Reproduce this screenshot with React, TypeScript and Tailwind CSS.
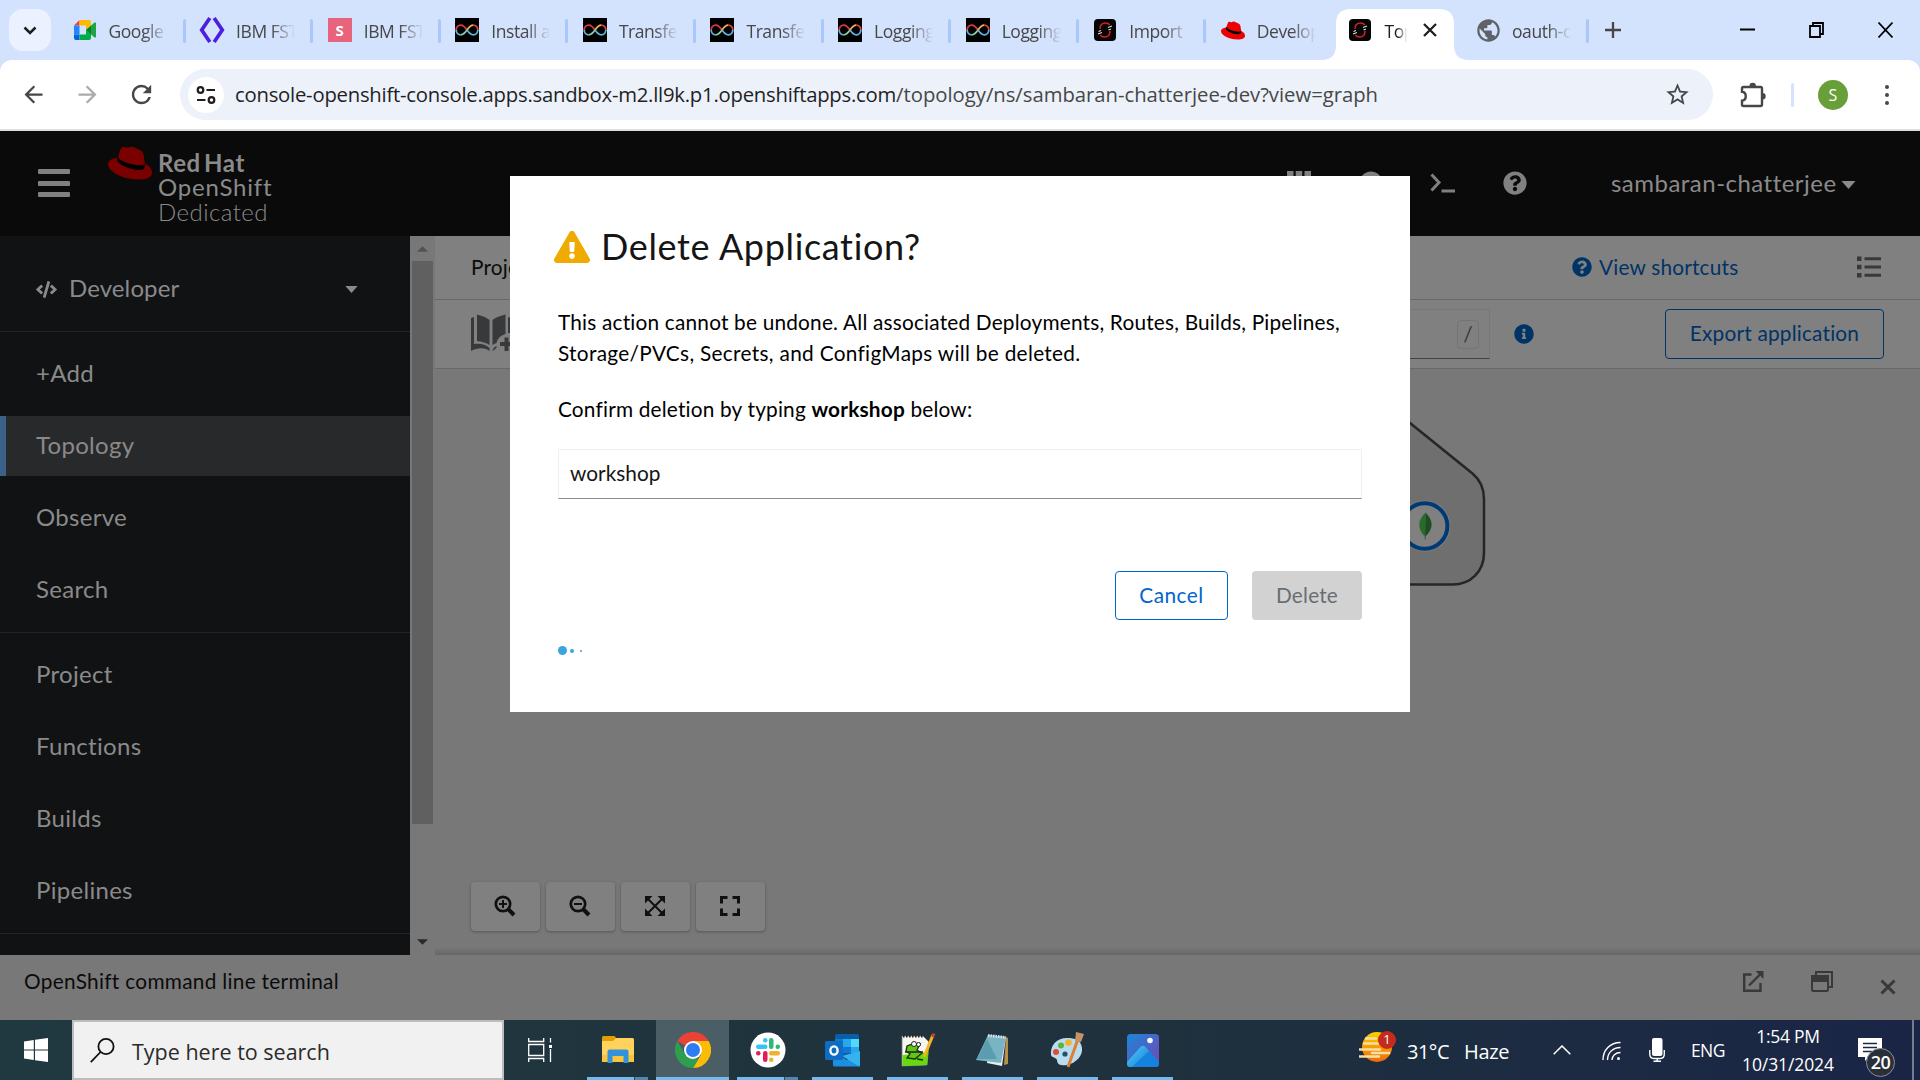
import type { ReactNode } from 'react';
import { FaCode, FaExclamationTriangle, FaInfoCircle, FaPlusCircle, FaQuestionCircle } from 'react-icons/fa';
import { MdArrowBack, MdArrowForward, MdPublic, MdRefresh, MdStarBorder } from 'react-icons/md';

/* ---------- browser tab icons ---------- */

const MeetIcon = () => (
  <svg width="24" height="24" viewBox="0 0 24 24">
    <path d="M1 7.500 6.500 2v5.500z" fill="#ea4335" />
    <path d="M1 7.500h5.500v9H1z" fill="#2684fc" />
    <path d="M1 16.500h5.500V22H3a2 2 0 0 1-2-2z" fill="#0066da" />
    <path d="M6.500 2H16a2 2 0 0 1 2 2v4.500L13 12V7.500H6.500z" fill="#ffba00" />
    <path d="M6.500 16.500H13V12l5 4v4a2 2 0 0 1-2 2H6.500z" fill="#00ac47" />
    <path d="M13 12 21.500 4.600c.6-.5 1.500-.1 1.500.7v13.400c0 .8-.9 1.200-1.500.7z" fill="#1ea446" />
    <path d="M18 8v8l-5-4z" fill="#00832d" />
  </svg>
);

const BracketsIcon = () => (
  <svg width="26" height="26" viewBox="0 0 24 24" fill="none" stroke="#4b1fe0" strokeWidth="3.400" className="shrink-0">
    <path d="M10 1 2.500 12 10 23" />
    <path d="M14 1l7.500 11L14 23" />
  </svg>
);

const SquareSIcon = () => (
  <span className="flex h-6 w-6 items-center justify-center bg-[#e8637c] text-[15px] font-bold text-white">S</span>
);

const InfinityIcon = () => (
  <svg width="24" height="24" viewBox="0 0 24 24" fill="none" strokeWidth="1.800">
    <path d="M0 0h24v24H0z" fill="#000" />
    <path d="M12 12C9.500 8.500 8 7.200 5.800 7.200 3 7.200 1.200 9.400 1.200 12" stroke="#e0383e" />
    <path d="M1.200 12c0 2.600 1.800 4.800 4.600 4.800" stroke="#57b7dd" />
    <path d="M5.800 16.800c2.200 0 3.700-1.300 6.200-4.800" stroke="#8fd0a0" />
    <path d="M12 12c2.500-3.500 4-4.800 6.200-4.800" stroke="#f0b45a" />
    <path d="M18.200 7.200c2.800 0 4.600 2.200 4.600 4.800" stroke="#e04a38" />
    <path d="M22.800 12c0 2.600-1.800 4.800-4.600 4.800-2.200 0-3.700-1.300-6.200-4.800" stroke="#57b7dd" />
  </svg>
);

const OpenShiftIcon = () => (
  <svg width="24" height="24" viewBox="0 0 24 24" fill="none">
    <rect x="1" y="1" width="22" height="22" rx="4" fill="#050505" />
    <path d="M7 11c0-4 2.500-6 5.500-6 2 0 3.500.8 4.300 2M17 13c0 4-2.500 6-5.500 6-2 0-3.500-.8-4.300-2" stroke="#d3202a" strokeWidth="1.500" />
    <path d="M15 9.500l4-1.500M5 16l4-1.500M5.500 13.500l2.500-1M15.500 12l2.500-1" stroke="#ddd" strokeWidth="1.200" />
  </svg>
);

/* Fedora: brim, then band, then crown on top. */
const Hat = ({ w, h, fill }: { w: number; h: number; fill: string }) => (
  <svg width={w} height={h} viewBox="0 0 132 100" className="shrink-0">
    <path d="M28 34C10 36 0 43 0 53c0 19 27 34 52 41 34 9 80 9 80-15 0-12-9-21-24-29z" fill={fill} />
    <path d="M30 30c-3 6-4 11-1 15 8 12 36 24 58 26 20 2 26-6 23-19z" fill="#000" />
    <path d="M30 31 37 10C40 2 45 1 52 3c7 2 9 1 13-1 5-2 10-1 16 2l15 7c6 3 9 7 11 15l4 27c-6 5-22 5-42 0C49 48 34 40 30 31z" fill={fill} />
  </svg>
);

type Tab = { title: string; icon: ReactNode; active?: boolean; sep?: boolean };

const tabs: Tab[] = [
  { title: 'Google', icon: <MeetIcon />, sep: true },
  { title: 'IBM FST', icon: <BracketsIcon />, sep: true },
  { title: 'IBM FST', icon: <SquareSIcon />, sep: true },
  { title: 'Install a', icon: <InfinityIcon />, sep: true },
  { title: 'Transfe', icon: <InfinityIcon />, sep: true },
  { title: 'Transfe', icon: <InfinityIcon />, sep: true },
  { title: 'Logging', icon: <InfinityIcon />, sep: true },
  { title: 'Logging', icon: <InfinityIcon />, sep: true },
  { title: 'Import', icon: <OpenShiftIcon />, sep: true },
  { title: 'Develop', icon: <Hat w={24} h={19} fill="#ee0000" /> },
  { title: 'Top', icon: <OpenShiftIcon />, active: true },
  { title: 'oauth-o', icon: <MdPublic className="shrink-0" size={27} color="#5f6368" />, sep: true },
];

function BrowserTab({ tab }: { tab: Tab }) {
  return (
    <div className="relative flex h-[60px] w-[127.6px] shrink-0 items-center pl-4">
      {tab.active && (
        <svg className="absolute bottom-0 left-[-11px]" width="148" height="51" viewBox="0 0 148 51">
          <path d="M0 51C10 51 15 46 15 36V15C15 5 20 0 30 0h88c10 0 15 5 15 15v21c0 10 5 15 15 15z" fill="#fff" />
        </svg>
      )}
      <span className="relative flex h-6 w-6 items-center justify-center">{tab.icon}</span>
      <span
        className={
          (tab.active ? 'w-[23px] text-[#1f1f1f]' : 'w-[59px] text-[#474747]') +
          ' relative ml-3 mt-[2px] overflow-hidden whitespace-nowrap text-[17.5px] leading-6 tracking-[-0.450px] [mask-image:linear-gradient(90deg,#000_60%,transparent)]'
        }
      >
        {tab.title}
      </span>
      {tab.active && (
        <svg className="relative ml-[16px]" width="14" height="14" viewBox="0 0 14 14" stroke="#1f1f1f" strokeWidth="2.300">
          <path d="M1 1l12 12M13 1 1 13" />
        </svg>
      )}
      {tab.sep && <i className="absolute right-[-1.500px] top-[19px] h-6 w-[3px] rounded bg-[#a8c7fa]" />}
    </div>
  );
}

function TabStrip() {
  return (
    <div className="flex h-[60px] items-center bg-[#d3e2fd] pl-[9px]">
      <div className="mr-[5.500px] flex h-[42px] w-[42px] items-center justify-center rounded-[14px] bg-[#ebf1fe]">
        <svg width="14" height="9" viewBox="0 0 14 9" fill="none" stroke="#1f1f1f" strokeWidth="2.500">
          <path d="M1.500 1.500 7 7l5.500-5.500" />
        </svg>
      </div>
      {tabs.map((t, i) => (
        <BrowserTab key={i} tab={t} />
      ))}
      <svg className="ml-[17px]" width="16" height="16" viewBox="0 0 16 16" stroke="#474747" strokeWidth="2.300">
        <path d="M8 0v16M0 8h16" />
      </svg>
      <div className="ml-auto flex items-center gap-[54px] pr-[27px]">
        <svg width="15" height="16" viewBox="0 0 15 16"><path d="M0 6.500h15v2H0z" /></svg>
        <svg width="15" height="16" viewBox="0 0 15 16" fill="none" stroke="#000" strokeWidth="1.800">
          <path d="M1 4h10v11H1zM4 4V1h10v11h-3" />
        </svg>
        <svg width="15" height="16" viewBox="0 0 15 16" stroke="#000" strokeWidth="1.700"><path d="M.5.500l14 15M14.500.500l-14 15" /></svg>
      </div>
    </div>
  );
}

function AddressBar() {
  return (
    <div className="bg-[#d3e2fd]">
      <div className="flex h-[71px] items-center rounded-t-[12px] border-b-2 border-[#dcdfde] bg-white pl-[20px]">
        <MdArrowBack size={27} color="#474747" />
        <MdArrowForward className="ml-[27px]" size={27} color="#ababab" />
        <MdRefresh className="ml-[26px]" size={29} color="#474747" />
        <div className="ml-[24px] flex h-[51px] w-[1533px] items-center rounded-full bg-[#ecf1fa] pl-2">
          <span className="flex h-[36px] w-[36px] items-center justify-center rounded-full bg-white">
            <svg width="20" height="20" viewBox="0 0 20 20" fill="none" stroke="#1f1f1f" strokeWidth="2.200">
              <circle cx="4.500" cy="5" r="2.800" />
              <path d="M10.500 5H19M1 15h8.500" />
              <circle cx="15.500" cy="15" r="2.800" />
            </svg>
          </span>
          <p className="mb-[2px] ml-[11px] whitespace-nowrap text-[20.3px] leading-[30px] text-[#1f1f1f]">
            <span className="tracking-[-0.230px]">console-openshift-console.apps.sandbox-m2.ll9k.p1.openshiftapps.com</span>
            <span className="tracking-[-0.020px] text-[#474747]">/topology/ns/sambaran-chatterjee-dev?view=graph</span>
          </p>
          <MdStarBorder className="ml-auto mr-[22px]" size={27} color="#474747" />
        </div>
        <svg className="ml-[27px]" width="26" height="26" viewBox="0 0 26 26">
          <path d="M2 6.500a1.500 1.500 0 0 1 1.500-1.500h17a1.500 1.500 0 0 1 1.500 1.500v16a1.500 1.500 0 0 1-1.500 1.500h-17A1.500 1.500 0 0 1 2 22.500v-3.800c5-.5 5-8.400 0-8.900z" fill="none" stroke="#474747" strokeWidth="2.400" />
          <path d="M9.500 4a3.200 3.200 0 0 1 6.400 0zM22.500 11a3.200 3.200 0 0 1 0 6.400z" fill="#474747" />
        </svg>
        <i className="ml-[25px] h-[24px] w-[3px] rounded bg-[#d3e2fd]" />
        <span className="ml-[24px] flex h-[30px] w-[30px] items-center justify-center rounded-full bg-[#689f38] text-[16px] text-white">S</span>
        <span className="ml-[37px] flex flex-col gap-[4px]">
          <i className="h-[4px] w-[4px] rounded-full bg-[#474747]" />
          <i className="h-[4px] w-[4px] rounded-full bg-[#474747]" />
          <i className="h-[4px] w-[4px] rounded-full bg-[#474747]" />
        </span>
      </div>
    </div>
  );
}

/* ---------- console masthead ---------- */

const CaretDown = ({ w = 14, h = 8, fill = '#8a8a8a' }: { w?: number; h?: number; fill?: string }) => (
  <svg width={w} height={h} viewBox="0 0 14 8"><path d="M0 0h14L7 8z" fill={fill} /></svg>
);

function Masthead() {
  return (
    <header className="flex h-[105px] shrink-0 bg-[#0a0a0a] text-[24px] text-[#8a8a8a]">
      <div className="ml-[38px] mt-[38px] flex w-[32px] flex-col gap-[6.500px]">
        <i className="h-[5px] rounded-[1px] bg-[#808080]" />
        <i className="h-[5px] rounded-[1px] bg-[#808080]" />
        <i className="h-[5px] rounded-[1px] bg-[#808080]" />
      </div>
      <span className="ml-[38px] mt-[15px]"><Hat w={44} h={34} fill="#7a0000" /></span>
      <div className="ml-[6px] mt-[18px] flex flex-col">
        <span className="h-[25px] font-bold leading-[27px] tracking-[0.550px] [word-spacing:-3px]">Red Hat</span>
        <span className="h-[25px] leading-[25px] tracking-[0.800px]">OpenShift</span>
        <span className="h-[25px] font-light leading-[25px] tracking-[0.450px]">Dedicated</span>
      </div>
      <div className="ml-auto flex h-[104px] items-center">
        <svg width="24" height="24" viewBox="0 0 24 24" fill="#808080">
          <path d="M0 0h6.500v6.500H0zM8.700 0h6.500v6.500H8.700zM17.500 0H24v6.500h-6.500zM0 8.700h24v6.500H0zM0 17.500h24V24H0z" />
        </svg>
        <FaPlusCircle className="ml-[48px]" size={24} color="#808080" />
        <svg className="ml-[47px]" width="25" height="20" viewBox="0 0 25 20" fill="none" stroke="#808080" strokeWidth="3">
          <path d="M1.500 1.500 9 9.500l-7.500 8M11.500 18H25" />
        </svg>
        <FaQuestionCircle className="ml-[48px]" size={24} color="#808080" />
        <span className="ml-[84px] w-[230px] whitespace-nowrap tracking-[0.480px]">sambaran-chatterjee</span>
        <span className="w-[79px] pt-[3px]"><CaretDown w={15} h={8} /></span>
      </div>
    </header>
  );
}

/* ---------- sidebar ---------- */

function NavGroup({ items }: { items: string[] }) {
  return (
    <ul className="flex flex-col gap-3 border-b border-[#222426] py-3">
      {items.map((name) => (
        <li
          key={name}
          className={
            (name === 'Topology' ? 'border-[#3b6286] bg-[#28292b]' : 'border-transparent') +
            ' flex h-[60px] items-center border-l-[6px] pb-[3px] pl-[30px]'
          }
        >
          {name}
        </li>
      ))}
    </ul>
  );
}

function Sidebar() {
  return (
    <nav className="flex h-[719px] w-[410px] shrink-0 flex-col overflow-hidden bg-[#111214] text-[24px] leading-[30px] tracking-[0.300px] text-[#8a8a8a]">
      <div className="flex h-[96px] shrink-0 items-center border-b border-[#222426] pl-[36px] pr-[52px] pt-[12px]">
        <FaCode size={21} color="#8a8a8a" />
        <span className="ml-[12px] pb-[4px] tracking-[0.100px]">Developer</span>
        <span className="ml-auto"><CaretDown w={13} h={7} /></span>
      </div>
      <NavGroup items={['+Add', 'Topology', 'Observe', 'Search']} />
      <NavGroup items={['Project', 'Functions', 'Builds', 'Pipelines']} />
    </nav>
  );
}

function Scrollbar() {
  return (
    <div className="flex h-[719px] w-[25px] shrink-0 flex-col items-center bg-[#787878]">
      <svg className="mt-[10px]" width="11" height="6" viewBox="0 0 12 6"><path d="M6 0l6 6H0z" fill="#525252" /></svg>
      <i className="mt-[9px] h-[563px] w-[21px] bg-[#606060]" />
      <svg className="mt-auto mb-[10px]" width="11" height="6" viewBox="0 0 12 6"><path d="M0 0h12L6 6z" fill="#2a2a2a" /></svg>
    </div>
  );
}

/* ---------- topology view ---------- */

const CatalogIcon = () => (
  <svg width="56" height="42" viewBox="0 0 56 42" fill="#37393b">
    <path d="M6 1.500C12 3 16 5 18.500 7v25c-3-2-7.500-3.500-12.500-4zM34.500 1.500C28.500 3 24 5 21.500 7v25c1-.8 2-1.300 4-2 1-5 5-8 9-9z" />
    <path d="M0 5l3-1v27c5-1 12 0 15.500 4v3C13 34 6 35 0 38zM37 4l3 1v15h-3zM21.500 38c0-2 1.500-4 4-5v2z" />
    <path d="M33.500 24.500h4v4.500H42v4h-4.500v5h-4v-5H29v-4h4.500z" />
  </svg>
);

const ListIcon = () => (
  <svg width="24" height="22" viewBox="0 0 24 22" fill="#38393b">
    <path d="M0 .5h4.500V5H0zM0 8.700h4.500v4.500H0zM0 17h4.500v4.500H0zM7.500 1.200H24v3H7.500zM7.500 9.400H24v3H7.500zM7.500 17.700H24v3H7.500z" />
  </svg>
);

const ZoomGlass = ({ plus }: { plus?: boolean }) => (
  <svg width="22" height="22" viewBox="0 0 22 22" fill="none" stroke="#101010">
    <circle cx="9" cy="9" r="7.200" strokeWidth="2.700" />
    <path d="M14 14l6 6" strokeWidth="4" />
    <path d={plus ? 'M5 9h8M9 5v8' : 'M5 9h8'} strokeWidth="2" />
  </svg>
);

const FitArrows = () => (
  <svg width="20" height="20" viewBox="0 0 20 20">
    <path d="M2.500 2.500l15 15M17.500 2.500l-15 15" stroke="#101010" strokeWidth="2" />
    <path d="M0 0h7.500L0 7.500zM20 0v7.500L12.500 0zM0 20v-7.500L7.500 20zM20 20h-7.500l7.500-7.500z" fill="#101010" />
  </svg>
);

const Corners = () => (
  <svg width="20" height="20" viewBox="0 0 20 20" fill="none" stroke="#101010" strokeWidth="3">
    <path d="M1.500 7.500v-6h6M12.500 1.500h6v6M18.500 12.500v6h-6M7.500 18.500h-6v-6" />
  </svg>
);

function Graph() {
  return (
    <svg className="absolute right-[422px] top-[40px]" width="100" height="190" viewBox="0 0 100 190">
      <path d="M0 4 12 14 74.500 64.500Q86 74 86 90V144C86 163 72 175.500 55 175.500H0" fill="#6f6f6f" stroke="#252626" strokeWidth="2.500" />
      <circle cx="26.700" cy="117" r="25.800" fill="#7c7c7c" />
      <circle cx="26.700" cy="117" r="22.700" fill="#808080" stroke="#003a75" strokeWidth="4" />
      <path d="M27.500 103.500c-8 8-8.500 16-.5 24.500z" fill="#2a6b2c" />
      <path d="M27.500 103.500c8 8 8.500 16-.5 24.500z" fill="#1e4f22" />
      <path d="M27.300 126v4.500" stroke="#555" strokeWidth="1.200" />
    </svg>
  );
}

function Topology() {
  return (
    <main className="relative flex h-[719px] flex-1 flex-col bg-[#787878] text-[20.8px] tracking-[0.200px]">
      <div className="flex h-[64px] shrink-0 items-center border-b border-[#696969] bg-[#808080] pl-[36px] pr-[39px] pb-[1px]">
        <span className="text-[#0b0b0b]">Project</span>
        <FaQuestionCircle className="ml-auto" size={20} color="#003366" />
        <span className="ml-[7px] w-[258px] text-[#003366]">View shortcuts</span>
        <ListIcon />
      </div>
      <div className="flex h-[69px] shrink-0 items-center border-b border-[#696969] bg-[#808080] pl-[36px] pr-[36px]">
        <CatalogIcon />
        <div className="ml-auto flex h-[50px] w-[200px] items-center justify-end border border-[#777] border-b-[#404142] pr-[10px]">
          <span className="flex h-[29px] w-[22px] items-center justify-center rounded-[4px] border border-[#747474] text-[#38393b]">/</span>
        </div>
        <FaInfoCircle className="ml-[24px]" size={20} color="#003366" />
        <button className="ml-[131px] h-[50px] w-[219px] whitespace-nowrap rounded-[4px] border-[1.500px] border-[#003366] pb-[2px] text-[#003366]">
          Export application
        </button>
      </div>
      <div className="relative flex flex-1 flex-col overflow-hidden">
        <Graph />
        <div className="mb-[24px] mt-auto flex gap-[6px] pl-[36px]">
          {[<ZoomGlass key="in" plus />, <ZoomGlass key="out" />, <FitArrows key="fit" />, <Corners key="reset" />].map((icon, i) => (
            <button key={i} className="flex h-[49px] w-[69px] items-center justify-center rounded-[4px] bg-[#808080] pb-[2px] pr-px shadow-[0_1px_3px_rgba(0,0,0,0.3)]">
              {icon}
            </button>
          ))}
        </div>
        <i className="absolute bottom-0 left-0 h-[8px] w-full bg-gradient-to-b from-transparent to-black/15" />
      </div>
    </main>
  );
}

function TerminalDrawer() {
  return (
    <section className="flex h-[65px] shrink-0 bg-[#787878] pl-[24px] pr-[24px]">
      <span className="mt-[11px] text-[20.8px] leading-[30px] tracking-[0.300px] text-[#0b0b0b]">OpenShift command line terminal</span>
      <svg className="ml-auto mt-[16px]" width="22" height="22" viewBox="0 0 22 22" fill="none" stroke="#38393b" strokeWidth="2.400">
        <path d="M9.500 3.500H2.200v16.300h16.300V12M7 14.500 19 2.500" />
        <path d="M13.500 0H21.500v8z" fill="#38393b" stroke="none" />
      </svg>
      <svg className="ml-[47px] mt-[16px]" width="22" height="22" viewBox="0 0 22 22" fill="none" stroke="#38393b" strokeWidth="2">
        <path d="M5 4V1h16v15h-3.500" />
        <rect x="1" y="5" width="16" height="15" rx="1.500" />
        <path d="M1 5h16v5H1z" fill="#38393b" />
      </svg>
      <svg className="ml-[47px] mt-[24px]" width="16" height="16" viewBox="0 0 16 16" stroke="#38393b" strokeWidth="3">
        <path d="M1.500 1.500l13 13M14.500 1.500l-13 13" />
      </svg>
    </section>
  );
}

/* ---------- dialog ---------- */

function DeleteDialog() {
  return (
    <div role="dialog" className="absolute left-[510px] top-[176px] flex h-[536px] w-[900px] flex-col bg-white pl-[48px] pr-[48px] text-[20.8px] tracking-[0.200px] text-[#151515]">
      <h1 className="ml-[-4px] mt-[47px] flex h-[48px] items-center text-[36px] font-normal leading-[48px] tracking-[0.650px]">
        <FaExclamationTriangle size={36} color="#f0ab00" />
        <span className="mb-[2px] ml-[11px]">Delete Application?</span>
      </h1>
      <p className="mt-[35px] whitespace-nowrap leading-[31px] text-black">
        This action cannot be undone. All associated Deployments, Routes, Builds, Pipelines,
        <br />
        <span className="tracking-[0.310px]">Storage/PVCs, Secrets, and ConfigMaps will be deleted.</span>
      </p>
      <p className="mt-[25px] leading-[31px] tracking-[0.190px] text-black">
        Confirm deletion by typing <b>workshop</b> below:
      </p>
      <div className="mt-[25px] flex h-[50px] items-center border border-[#f0f0f0] border-b-[#8a8d90] pb-[2px] pl-[11px] tracking-[0.050px]">workshop</div>
      <div className="mt-[72px] flex justify-end gap-[24px]">
        <button className="h-[49px] w-[113px] rounded-[4px] border border-[#0066cc] pb-[2px] tracking-[0.500px] text-[#0066cc]">Cancel</button>
        <button className="h-[49px] w-[110px] rounded-[4px] bg-[#d2d2d2] pb-[2px] text-[#6a6e73]">Delete</button>
      </div>
      <div className="mt-[26px] flex items-center gap-[3px]">
        <i className="h-[9px] w-[9px] rounded-full bg-[#39a5dc]" />
        <i className="h-[4px] w-[4px] rounded-full bg-[#39a5dc]" />
        <i className="ml-[3px] h-[2px] w-[2px] rounded-full bg-[#39a5dc]" />
      </div>
    </div>
  );
}

/* ---------- Windows taskbar ---------- */

const FolderApp = () => (
  <svg width="34" height="30" viewBox="0 0 34 30">
    <path d="M1 2.500A1.500 1.500 0 0 1 2.500 1h11L16 4v3H1z" fill="#e39b06" />
    <path d="M1 6h11l3-3h16.500A1.500 1.500 0 0 1 33 4.500v22H1z" fill="#ffd35b" />
    <path d="M1 20h32v7H1z" fill="#f9c53e" />
    <path d="M6.500 28V16.500a2 2 0 0 1 2-2h17a2 2 0 0 1 2 2V28h-5v-7h-11v7z" fill="#3392dd" />
  </svg>
);

const ChromeApp = () => (
  <svg width="36" height="36" viewBox="0 0 36 36">
    <path d="M18 18 2.400 9A18 18 0 0 1 33.600 9z" fill="#ea4335" />
    <path d="M18 18V9h15.600A18 18 0 0 1 18 36l8-13.500z" fill="#fbbc05" />
    <path d="M2.400 9 10 22.500 18 27h5.300L18 36A18 18 0 0 1 2.400 9z" fill="#2e9e4f" />
    <circle cx="18" cy="18" r="9" fill="#fff" />
    <circle cx="18" cy="18" r="7" fill="#2f7bf0" />
  </svg>
);

const SlackApp = () => (
  <svg width="36" height="36" viewBox="0 0 36 36">
    <circle cx="18" cy="18" r="17.500" fill="#fff" />
    <rect x="13" y="6" width="4.500" height="4.500" rx="2.200" fill="#36c5f0" />
    <rect x="6" y="12.500" width="11.500" height="4.500" rx="2.200" fill="#36c5f0" />
    <rect x="19" y="6" width="4.500" height="11" rx="2.200" fill="#2eb67d" />
    <rect x="25.500" y="12.500" width="4.500" height="4.500" rx="2.200" fill="#2eb67d" />
    <rect x="19" y="19" width="11" height="4.500" rx="2.200" fill="#ecb22e" />
    <rect x="19" y="25.500" width="4.500" height="4.500" rx="2.200" fill="#ecb22e" />
    <rect x="13" y="19" width="4.500" height="11" rx="2.200" fill="#e01e5a" />
    <rect x="6" y="19" width="4.500" height="4.500" rx="2.200" fill="#e01e5a" />
  </svg>
);

const OutlookApp = () => (
  <svg width="36" height="34" viewBox="0 0 36 34">
    <rect x="10" y="1" width="24" height="22" rx="1.500" fill="#0a5ea8" />
    <path d="M10 6h8v8h-8z" fill="#1279cf" /><path d="M18 6h8v8h-8z" fill="#28a8ea" /><path d="M26 6h8v8h-8z" fill="#50d9ff" />
    <path d="M18 14h8v6h-8z" fill="#0f78d4" /><path d="M26 14h8v6h-8z" fill="#28a8ea" />
    <path d="M8 18l14 9 13-9v14a1.500 1.500 0 0 1-1.500 1.500h-24A1.500 1.500 0 0 1 8 32z" fill="#1b8fe0" />
    <path d="M35 18v14a1.500 1.500 0 0 1-1 1.500L17 23z" fill="#35b2f0" />
    <rect x="0" y="8" width="18" height="19" rx="1.500" fill="#0f6cc4" />
    <ellipse cx="9" cy="17.500" rx="3.600" ry="4.200" fill="none" stroke="#fff" strokeWidth="2.300" />
  </svg>
);

const NotepadPlusApp = () => (
  <svg width="36" height="34" viewBox="0 0 36 34">
    <path d="M2 3h21l6 6-2 23-25 1z" fill="#f6f6ee" stroke="#777" strokeWidth=".8" />
    <path d="M2.500 22l26-3-1.500 13-24.500 1z" fill="#67d90f" />
    <path d="M3 3h20" stroke="#222" strokeWidth="3" strokeDasharray="1.500 1.500" />
    <path d="M7 13c5-3 9 0 13-2l-3 6 5 3-7 6-8-1 3-4-4-3z" fill="#5fc814" stroke="#18330a" strokeWidth="1.300" />
    <circle cx="14" cy="11" r="2.500" fill="#fff" stroke="#222" /><circle cx="18.500" cy="11.500" r="2" fill="#fff" stroke="#222" />
    <path d="M5 19h18M17 26l6 1" stroke="#222" strokeWidth="1.400" />
    <path d="M33 2 24 24" stroke="#f4b51d" strokeWidth="3" /><path d="M34 .5 32.800 4" stroke="#c43d2e" strokeWidth="3" />
  </svg>
);

const NotepadApp = () => (
  <svg width="34" height="34" viewBox="0 0 34 34">
    <path d="M30 4l2 1v26l-4 1z" fill="#b9904a" />
    <path d="M12 2l18 2-4 29-15-3z" fill="#e8eef0" />
    <path d="M12 2l18 2-5 26L0 27z" fill="#79b4c4" />
    <path d="M11 6l10 20L1 26z" fill="#4f93a6" opacity=".7" />
    <path d="M12 2.500l18 2" stroke="#d9dfe2" strokeWidth="3" strokeDasharray="1.500 1" />
  </svg>
);

const PaintApp = () => (
  <svg width="36" height="36" viewBox="0 0 36 36">
    <path d="M17 6C7 6 0 13 1 23c1 3 5 2 6 5 0 5 5 6 10 5 9-2 16-9 15-17S25 6 17 6z" fill="#b9dcef" />
    <circle cx="6" cy="20" r="3" fill="#de4b38" /><circle cx="11" cy="13.500" r="3" fill="#5cb43c" /><circle cx="18.500" cy="10.500" r="3.200" fill="#f3b229" />
    <circle cx="15" cy="22" r="2.600" fill="#24506e" />
    <path d="M28 7 18 35" stroke="#dd7f34" strokeWidth="3" /><path d="M26 0l8 2-3 8-6-1z" fill="#c69364" />
  </svg>
);

const PhotosApp = () => (
  <svg width="32" height="33" viewBox="0 0 32 33">
    <defs>
      <linearGradient id="photoSky" x1="0" y1="0" x2="1" y2="1"><stop offset="0" stopColor="#1a86d9" /><stop offset="1" stopColor="#7a45b0" /></linearGradient>
      <linearGradient id="photoHill" x1="0" y1="0" x2="1" y2="1"><stop offset="0" stopColor="#4fd3fb" /><stop offset="1" stopColor="#1877d6" /></linearGradient>
    </defs>
    <rect width="32" height="33" rx="3.500" fill="url(#photoSky)" />
    <path d="M0 28 13.500 13c1.500-1.600 3.500-1.600 5 0L32 27.500v2a3.500 3.500 0 0 1-3.500 3.500h-25A3.500 3.500 0 0 1 0 29.500z" fill="#1583de" />
    <path d="M0 28 13.500 13c1.500-1.600 3.500-1.600 5 0l3.500 4L5 33H3.500A3.500 3.500 0 0 1 0 29.500z" fill="url(#photoHill)" />
    <circle cx="23" cy="6.500" r="2.800" fill="#f2f5fb" />
  </svg>
);

const apps: { icon: ReactNode; kind: 'stack' | 'active' | 'open' }[] = [
  { icon: <FolderApp />, kind: 'stack' },
  { icon: <ChromeApp />, kind: 'active' },
  { icon: <SlackApp />, kind: 'stack' },
  { icon: <OutlookApp />, kind: 'open' },
  { icon: <NotepadPlusApp />, kind: 'open' },
  { icon: <NotepadApp />, kind: 'open' },
  { icon: <PaintApp />, kind: 'open' },
  { icon: <PhotosApp />, kind: 'open' },
];

function TaskbarApp({ icon, kind }: { icon: ReactNode; kind: string }) {
  return (
    <div className={(kind === 'active' ? 'bg-[#4b5d65]' : '') + ' mr-[2px] flex h-[60px] w-[73px] shrink-0 flex-col items-center'}>
      <span className="flex h-[57px] items-center pt-[3px]">{icon}</span>
      <span className={(kind === 'active' ? 'w-full' : 'w-[61px]') + ' flex h-[3px] bg-[#76b9ed]'}>
        {kind === 'stack' && <i className="ml-auto h-[3px] w-[14px] border-l border-[#2b4a5e] bg-[#5387b0]" />}
      </span>
    </div>
  );
}

function Taskbar() {
  return (
    <footer className="flex h-[60px] shrink-0 bg-gradient-to-r from-[#20383f] via-[#1f313d] via-60% to-[#1a2546] text-white">
      <span className="flex w-[72px] items-center justify-center">
        <svg width="24" height="24" viewBox="0 0 24 24" fill="#fff">
          <path d="M0 3.400 9.800 2v9.500H0zM11 1.800 24 0v11.500H11zM0 12.600h9.800v9.400L0 20.600zM11 12.600h13V24l-13-1.800z" />
        </svg>
      </span>
      <div className="flex w-[432px] items-center border-2 border-[#bdbdbd] bg-[#f1f1f1] pl-[16px] text-[#2b2b2b]">
        <svg width="25" height="25" viewBox="0 0 25 25" fill="none" stroke="#111" strokeWidth="1.800">
          <circle cx="16" cy="8.500" r="7.600" />
          <path d="M10.500 14 .8 24.200" />
        </svg>
        <span className="ml-[17px] pt-[4px] text-[21.5px] leading-[30px]">Type here to search</span>
      </div>
      <span className="flex w-[77px] items-center justify-center">
        <svg className="mr-[5px]" width="24" height="24" viewBox="0 0 24 24" fill="none" stroke="#fff" strokeWidth="1.300">
          <path d="M.7 0v3.500h15V0M.7 6.500h15v11H.7zM.7 24v-3.500h15V24M22.500 0v4.500M22.500 11v13" />
          <path d="M21 7h3v3h-3z" fill="#fff" stroke="none" />
        </svg>
      </span>
      {apps.map((a, i) => (
        <TaskbarApp key={i} icon={a.icon} kind={a.kind} />
      ))}
      <div className="ml-auto flex items-center">
        <span className="relative mb-[6px] h-[32px] w-[38px]">
          <svg width="38" height="32" viewBox="0 0 38 32">
            <defs>
              <linearGradient id="sun" x1="0" y1="0" x2="0" y2="1"><stop offset="0" stopColor="#ffd000" /><stop offset="1" stopColor="#ee6a0a" /></linearGradient>
            </defs>
            <circle cx="18" cy="16" r="15" fill="url(#sun)" />
            <path d="M7 7.500h10M5 12.500h14M0 18.500h21M13 22h17M0 25.500h20" stroke="#f6dfa2" strokeWidth="2.500" strokeLinecap="round" />
          </svg>
          <i className="absolute right-[1px] top-[0px] flex h-[18px] w-[18px] items-center justify-center rounded-full bg-[#c42b1c] text-[13px] not-italic">1</i>
        </span>
        <span className="ml-[10px] w-[57px] whitespace-nowrap pt-[3px] text-[20px] tracking-[-0.500px]">31°C</span>
        <span className="w-[89px] pt-[3px] text-[20px] tracking-[-0.300px]">Haze</span>
        <svg width="18" height="10" viewBox="0 0 18 10" fill="none" stroke="#fff" strokeWidth="1.500"><path d="M.7 9.300 9 1l8.300 8.300" /></svg>
        <svg className="ml-[31px] mt-[2px]" width="19" height="20" viewBox="0 0 19 20" fill="none" stroke="#fff" strokeWidth="1.400">
          <path d="M1 19C1 9 8 1.500 18.500 1.500" />
          <path d="M5.500 19C5.500 12 10.500 6.500 18.500 6.500" />
          <path d="M10 19c0-4 3.500-7.500 8.500-7.500" />
          <circle cx="16.500" cy="17.500" r="1.500" fill="#fff" stroke="none" />
        </svg>
        <svg className="ml-[28px]" width="16" height="24" viewBox="0 0 16 24" fill="none" stroke="#fff" strokeWidth="1.400">
          <rect x="3" y="0" width="10.500" height="18" rx="2" fill="#fff" stroke="none" />
          <path d="M.8 12v4c0 3 1.500 4.500 4 4.500h6.500c2.500 0 4-1.500 4-4.500v-4M8.200 20.500v3M4.500 23.300h7.500" />
        </svg>
        <span className="ml-[26px] w-[45px] text-[17.5px] tracking-[-0.600px]">ENG</span>
        <div className="flex w-[104px] flex-col items-center whitespace-nowrap text-[17.5px] leading-[28px] tracking-[-0.100px]">
          <span className="tracking-[-0.300px]">1:54 PM</span>
          <span>10/31/2024</span>
        </div>
        <span className="relative ml-[18px] h-[44px] w-[54px]">
          <svg className="absolute left-0 top-[10px]" width="24" height="24" viewBox="0 0 24 24">
            <path d="M0 0h24v19H11l-4 4v-4H0z" fill="#fff" />
            <path d="M5 5.500h14M5 9.500h14M5 13.500h9" stroke="#1b2744" strokeWidth="1.300" />
          </svg>
          <i className="absolute left-[8px] top-[20px] flex h-[29px] w-[29px] items-center justify-center rounded-full border border-[#8b8f99] bg-[#2b2f38] text-[18px] font-semibold not-italic tracking-[-0.500px]">20</i>
        </span>
        <i className="h-[60px] w-[8px] border-l-2 border-[#757c8d]" />
      </div>
    </footer>
  );
}

export default function App() {
  return (
    <div className="relative flex h-[1080px] w-[1920px] flex-col overflow-hidden bg-white font-['Open_Sans',sans-serif]">
      <TabStrip />
      <AddressBar />
      <div className="flex flex-col font-['Lato',sans-serif] [font-variant-ligatures:none]">
        <Masthead />
        <div className="flex">
          <Sidebar />
          <Scrollbar />
          <Topology />
        </div>
        <TerminalDrawer />
        <DeleteDialog />
      </div>
      <Taskbar />
    </div>
  );
}
